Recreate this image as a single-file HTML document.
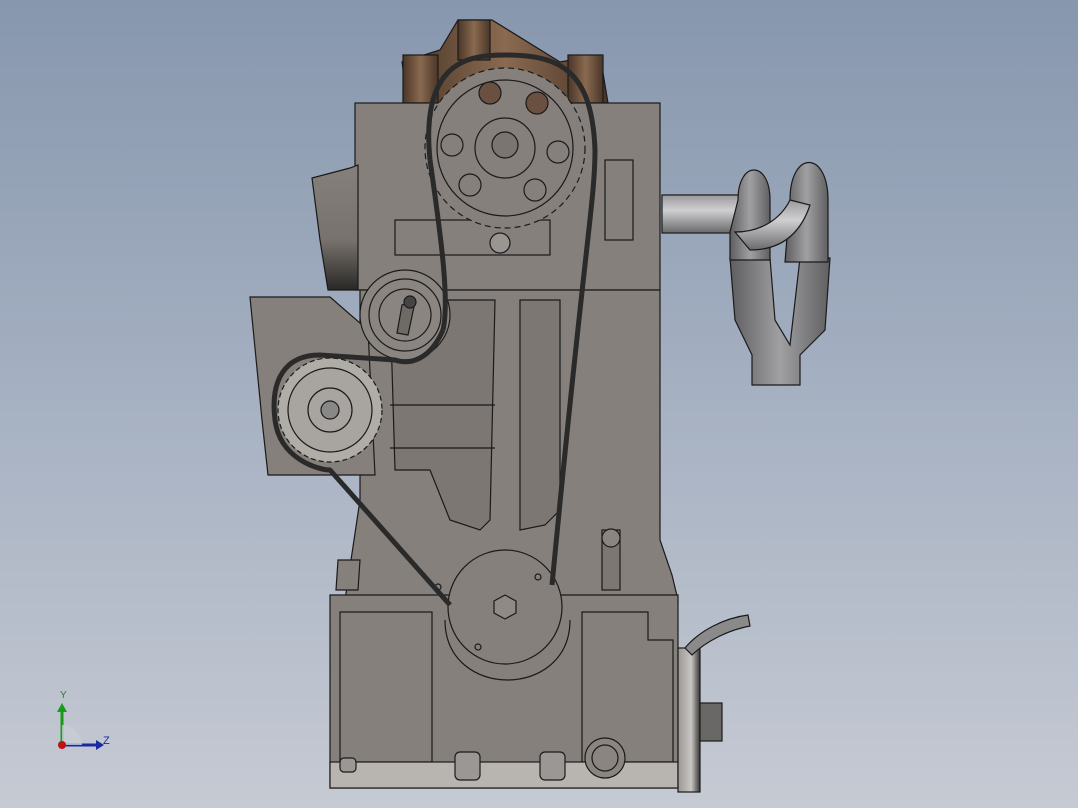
<!DOCTYPE html>
<html><head><style>
html,body{margin:0;padding:0;width:1078px;height:808px;overflow:hidden}
body{background:linear-gradient(#8797ae,#a6b1c2 50%,#c6cad3)}
svg{position:absolute;left:0;top:0}
</style></head><body>
<svg width="1078" height="808" viewBox="0 0 1078 808" xmlns="http://www.w3.org/2000/svg">
<defs>
<linearGradient id="br" x1="0" x2="1"><stop offset="0" stop-color="#4a3628"/><stop offset=".5" stop-color="#8a6a50"/><stop offset="1" stop-color="#4a3628"/></linearGradient>
<linearGradient id="pipe" x1="0" x2="0" y1="0" y2="1"><stop offset="0" stop-color="#9a9a9c"/><stop offset=".4" stop-color="#d0d0d2"/><stop offset="1" stop-color="#6a6a6c"/></linearGradient>
<linearGradient id="pipev" x1="0" x2="1"><stop offset="0" stop-color="#5e5e60"/><stop offset=".5" stop-color="#a0a0a2"/><stop offset="1" stop-color="#606062"/></linearGradient>
<linearGradient id="lp" x1="0" x2="0" y1="0" y2="1"><stop offset="0" stop-color="#85807b"/><stop offset=".6" stop-color="#77726d"/><stop offset="1" stop-color="#2a2826"/></linearGradient>
<linearGradient id="fl" x1="0" x2="1"><stop offset="0" stop-color="#9a9794"/><stop offset=".6" stop-color="#c8c6c2"/><stop offset="1" stop-color="#3a3836"/></linearGradient>
</defs>
<g stroke="#1a1a1a" stroke-width="1.2" fill="#85807b">
<!-- brown top -->
<path d="M402 62 L440 50 L458 20 L492 20 L560 62 L600 55 L608 103 L408 103 Z" fill="url(#br)"/>
<rect x="403" y="55" width="35" height="48" fill="url(#br)"/>
<rect x="568" y="55" width="35" height="48" fill="url(#br)"/>
<rect x="458" y="20" width="32" height="40" fill="url(#br)"/>
<!-- exhaust -->
<path d="M730 258 L770 258 L775 320 L790 345 L800 258 L830 258 L825 330 L800 355 L800 385 L752 385 L752 355 L735 320 Z" fill="url(#pipev)"/>
<rect x="662" y="195" width="80" height="38" fill="url(#pipe)"/>
<path d="M738 200 C738 160 770 160 770 200 L770 260 L730 260 L730 232 Z" fill="url(#pipev)"/>
<path d="M790 200 C790 150 828 150 828 200 L828 262 L785 262 Z" fill="url(#pipev)"/>
<path d="M735 232 C760 232 780 220 790 200 L810 205 C800 235 780 250 750 250 Z" fill="url(#pipe)"/>
<!-- body -->
<rect x="355" y="103" width="305" height="187"/>
<path d="M312 178 L350 168 L358 165 L358 290 L328 290 L320 240 Z" fill="url(#lp)"/>
<path d="M360 290 L660 290 L660 540 L672 575 L678 600 L345 600 L360 500 Z"/>
<path d="M338 560 L360 560 L358 590 L336 590 Z"/>
<!-- left cover -->
<path d="M250 297 L330 297 L368 330 L375 475 L268 475 L262 420 Z"/>
<!-- oil pan -->
<path d="M330 595 L678 595 L678 788 L330 788 Z"/>
<rect x="340" y="612" width="92" height="150" fill="none"/>
<path d="M582 612 L648 612 L648 640 L673 640 L673 762 L582 762 Z" fill="none"/>
<rect x="330" y="762" width="348" height="26" fill="#b8b5b0"/>
<rect x="678" y="648" width="22" height="144" fill="url(#fl)"/>
<rect x="700" y="703" width="22" height="38" fill="#6a6866"/>
<path d="M685 648 C700 630 725 618 748 615 L750 626 C728 630 705 642 692 655 Z" fill="#8a8a8a"/>
<!-- details upper -->
<rect x="395" y="220" width="155" height="35" fill="none"/>
<rect x="605" y="160" width="28" height="80" fill="none"/>
<path d="M390 300 L395 470 L430 470 L450 520 L480 530 L490 520 L495 300 Z" fill="#7c7772"/>
<path d="M520 300 L520 530 L545 525 L560 510 L560 300 Z" fill="#7c7772"/>
<line x1="390" y1="405" x2="495" y2="405"/><line x1="390" y1="448" x2="495" y2="448"/>
<rect x="602" y="530" width="18" height="60" fill="#7c7772"/>
<circle cx="611" cy="538" r="9" fill="#8a8580"/>
<rect x="455" y="752" width="25" height="28" rx="5" fill="#9a9794"/>
<rect x="540" y="752" width="25" height="28" rx="5" fill="#9a9794"/>
<circle cx="605" cy="758" r="20" fill="#8a8580"/>
<circle cx="605" cy="758" r="13" fill="none"/>
<rect x="340" y="758" width="16" height="14" rx="4" fill="#9a9794"/>
<!-- cam gear -->
<circle cx="505" cy="148" r="80" fill="#85807b" stroke-dasharray="6 4"/>
<circle cx="505" cy="148" r="68" fill="#85807b"/>
<circle cx="505" cy="148" r="30" fill="none"/>
<circle cx="505" cy="145" r="13" fill="#7a7570"/>
<circle cx="452" cy="145" r="11" fill="none"/><circle cx="558" cy="152" r="11" fill="none"/>
<circle cx="470" cy="185" r="11" fill="none"/><circle cx="490" cy="93" r="11" fill="#6a5040"/>
<circle cx="535" cy="190" r="11" fill="none"/><circle cx="537" cy="103" r="11" fill="#6a5040"/>
<circle cx="500" cy="243" r="10" fill="#9a9590"/>
<!-- tensioner -->
<circle cx="405" cy="315" r="45" fill="#8a8580"/>
<circle cx="405" cy="315" r="36" fill="none"/>
<circle cx="405" cy="315" r="26" fill="none"/>
<path d="M402 305 L415 302 L408 335 L397 333 Z" fill="#6e6a66"/>
<circle cx="410" cy="302" r="6" fill="#444"/>
<!-- left gear -->
<circle cx="330" cy="410" r="52" fill="#b0aca6" stroke-dasharray="5 3"/>
<circle cx="330" cy="410" r="42" fill="#a8a49f"/>
<circle cx="330" cy="410" r="22" fill="none"/>
<circle cx="330" cy="410" r="9" fill="#888"/>
<!-- crank pulley -->
<path d="M445 620 C445 700 570 700 570 620" fill="none"/>
<circle cx="505" cy="607" r="57" fill="#85807b"/>
<polygon points="505,595 516,601 516,613 505,619 494,613 494,601" fill="#8f8a85"/>
<circle cx="538" cy="577" r="3" fill="none"/><circle cx="438" cy="587" r="3" fill="none"/><circle cx="478" cy="647" r="3" fill="none"/>
</g>
<!-- belt -->
<g fill="none" stroke="#2a2a2a" stroke-width="5" stroke-linejoin="round">
<path d="M430 160 C420 60 470 55 505 55 C560 55 592 70 595 150 C595 200 585 240 552 585"/>
<path d="M430 160 C440 230 450 300 443 330"/>
<path d="M443 330 C430 360 410 365 395 360 L320 355 C285 355 270 380 275 420 C280 460 320 470 330 470 L450 605"/>
</g>
<!-- axis triad -->
<g>
<line x1="62" y1="745" x2="62" y2="708" stroke="#1a9a1a" stroke-width="3"/>
<polygon points="57,712 67,712 62,703" fill="#1a9a1a"/>
<line x1="62" y1="745" x2="98" y2="745" stroke="#1a2aa0" stroke-width="3"/>
<polygon points="96,740 96,750 104,745" fill="#1a2aa0"/>
<path d="M62 745 L62 725 A20 20 0 0 1 82 745 Z" fill="#c8ccd4" opacity=".8"/>
<circle cx="62" cy="745" r="4" fill="#c01010"/>
<text x="60" y="698" font-family="Liberation Sans, sans-serif" font-size="10" fill="#1a8a1a">Y</text>
<text x="103" y="744" font-family="Liberation Sans, sans-serif" font-size="11" fill="#1a2aa0">Z</text>
</g>
</svg>
</body></html>
